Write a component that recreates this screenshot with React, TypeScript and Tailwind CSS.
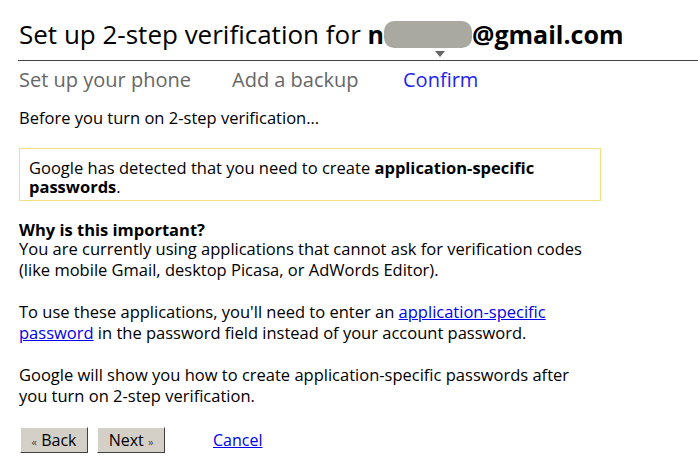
import React from 'react';

const font = { fontFamily: '"Open Sans", "Noto Sans", "DejaVu Sans", sans-serif' };

const steps = [
  { id: 'phone', label: 'Set up your phone', active: false },
  { id: 'backup', label: 'Add a backup', active: false },
  { id: 'confirm', label: 'Confirm', active: true },
];

const StepTabs: React.FC = () => (
  <div className="flex pl-[19px] h-[38px] items-center text-[20px] leading-none">
    {steps.map((step, i) => (
      <div
        key={step.id}
        className={`relative ${i === 0 ? 'w-[213px]' : i === 1 ? 'w-[171px]' : ''} ${
          step.active ? 'text-[#2323f0]' : 'text-[#666666]'
        }`}
      >
        {step.active && (
          <span className="absolute left-[32px] -top-[19px] w-0 h-0 border-l-[5px] border-r-[5px] border-t-[6px] border-l-transparent border-r-transparent border-t-[#666666]" />
        )}
        {step.label}
      </div>
    ))}
  </div>
);

const App: React.FC = () => {
  return (
    <div className="w-[698px] h-[476px] bg-white text-black overflow-hidden" style={font}>
      <div className="ml-[18px] pl-[1px] pt-[17px] pb-[9px] border-b border-[#444444]">
        <h1 className="text-[26px] leading-[34px] font-normal flex items-center">
          Set up 2-step verification for&nbsp;
          <span className="font-bold text-[25px]">n</span>
          <span className="inline-block w-[88px] h-[27px] rounded-[10px] bg-[#a9a9a2]" />
          <span className="font-bold text-[25px]">@gmail.com</span>
        </h1>
      </div>

      <StepTabs />

      <div className="pl-[19px] w-[601px] text-[16.5px] leading-[21px]">
        <p className="mt-[8px]">Before you turn on 2-step verification...</p>

        <div className="mt-[20px] border border-[#f5de7e] px-[9px] pt-[9px] pb-[4px] leading-[19px]">
          Google has detected that you need to create <b>application-specific passwords</b>.
        </div>

        <div className="mt-[20px] w-[575px]">
          <p className="font-bold leading-[17px]">Why is this important?</p>
          <p>
            You are currently using applications that cannot ask for verification codes (like mobile Gmail, desktop Picasa, or AdWords Editor).
          </p>
          <p className="mt-[21px]">
            To use these applications, you'll need to enter an{' '}
            <a href="#" className="text-[#0000ee] underline">application-specific password</a>{' '}
            in the password field instead of your account password.
          </p>
          <p className="mt-[21px]">
            Google will show you how to create application-specific passwords after you turn on 2-step verification.
          </p>
        </div>

        <div className="mt-[21px] flex items-center">
          <button className="h-[26px] w-[68px] ml-[1px] bg-[#d4d0c8] border border-t-white border-l-white border-r-[#404040] border-b-[#404040] text-[16px] leading-none text-black">
            <span className="text-[11px] text-[#444]">«</span> Back
          </button>
          <button className="h-[26px] w-[68px] ml-[9px] bg-[#d4d0c8] border border-t-white border-l-white border-r-[#404040] border-b-[#404040] text-[16px] leading-none text-black">
            Next <span className="text-[11px] text-[#444]">»</span>
          </button>
          <a href="#" className="ml-[48px] text-[16px] text-[#0000ee] underline">Cancel</a>
        </div>
      </div>
    </div>
  );
};

export default App;
